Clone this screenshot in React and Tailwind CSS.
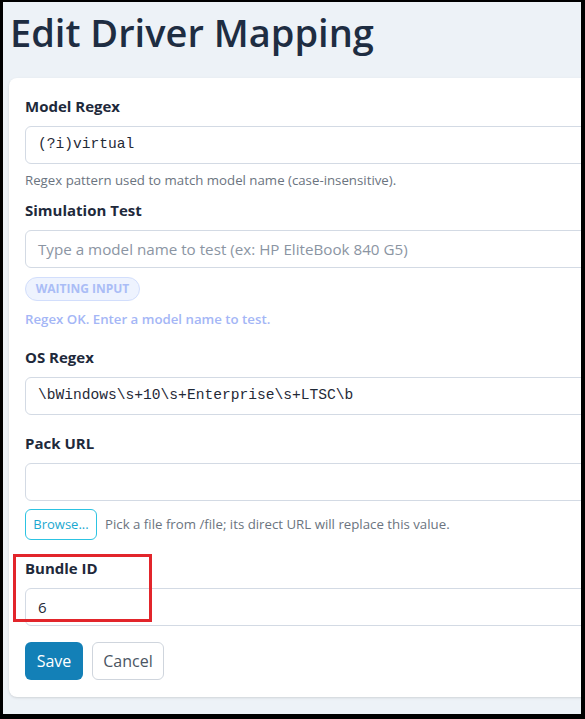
import React from "react";

function Label({ children, className = "" }) {
  return (
    <div className={"text-[15px] leading-6 font-bold text-[#1e293b] " + className}>{children}</div>
  );
}

function Field({ value, placeholder, mono, className = "" }) {
  return (
    <div
      className={
        "h-[38px] w-full rounded-md border border-[#d3dae4] bg-white px-3 flex items-center " +
        className
      }
    >
      {value ? (
        <span
          className={
            mono
              ? "font-['Liberation_Mono',monospace] text-[14.6px] text-[#1f2937]"
              : "text-[15px] text-[#1f2937]"
          }
        >
          {value}
        </span>
      ) : placeholder ? (
        <span className="text-[15.2px] text-[#8b95a3]">{placeholder}</span>
      ) : null}
    </div>
  );
}

export default function App() {
  return (
    <div className="w-[585px] h-[719px] bg-black pt-[2px] pl-[3px] pr-[4px] pb-[5px] font-['Open_Sans',sans-serif]">
      <div className="relative w-[578px] h-[712px] bg-[#edf2f7] overflow-hidden">
        <h1 className="pl-[7px] pt-[6px] text-[38px] leading-[48px] font-semibold text-[#1e2d42]">
          Edit Driver Mapping
        </h1>
        <div className="ml-[6px] mt-[22px] w-[640px] rounded-lg bg-white shadow-sm px-4 pt-4 pb-[17px]">
          <Label className="mb-2">Model Regex</Label>
          <Field value="(?i)virtual" mono />
          <div className="mt-[6px] text-[13.25px] leading-5 text-[#6b7480]">
            Regex pattern used to match model name (case-insensitive).
          </div>

          <Label className="mt-2 mb-2">Simulation Test</Label>
          <Field placeholder="Type a model name to test (ex: HP EliteBook 840 G5)" />
          <div className="mt-[9px] flex">
            <span className="h-6 w-[115px] rounded-full border border-[#d2defc] bg-[#eef3fe] text-[12px] font-bold text-[#aabdf6] flex items-center justify-center">
              WAITING INPUT
            </span>
          </div>
          <div className="mt-2 text-[13.25px] leading-5 font-semibold text-[#a4b6f6]">
            Regex OK. Enter a model name to test.
          </div>

          <Label className="mt-4 mb-2">OS Regex</Label>
          <Field value="\bWindows\s+10\s+Enterprise\s+LTSC\b" mono />

          <Label className="mt-4 mb-2">Pack URL</Label>
          <Field />
          <div className="mt-2 flex items-center gap-2">
            <span className="h-[31px] w-[72px] rounded-md border border-[#2cc3e2] bg-white text-[13px] text-[#1ba8d0] flex items-center justify-center">
              Browse...
            </span>
            <span className="text-[13.25px] text-[#6b7480]">
              Pick a file from /file; its direct URL will replace this value.
            </span>
          </div>

          <Label className="mt-4 mb-2">Bundle ID</Label>
          <Field value="6" />

          <div className="mt-4 flex gap-[9px]">
            <span className="h-[38px] w-[58px] rounded-md bg-[#1380b7] text-[16px] text-white flex items-center justify-center">
              Save
            </span>
            <span className="h-[38px] w-[72px] rounded-md border border-[#cfd5dd] bg-white text-[16px] text-[#4b5563] flex items-center justify-center">
              Cancel
            </span>
          </div>
        </div>
        <div className="absolute left-[10px] top-[552px] w-[139px] h-[68px] border-[3px] border-[#e2252b]" />
      </div>
    </div>
  );
}
